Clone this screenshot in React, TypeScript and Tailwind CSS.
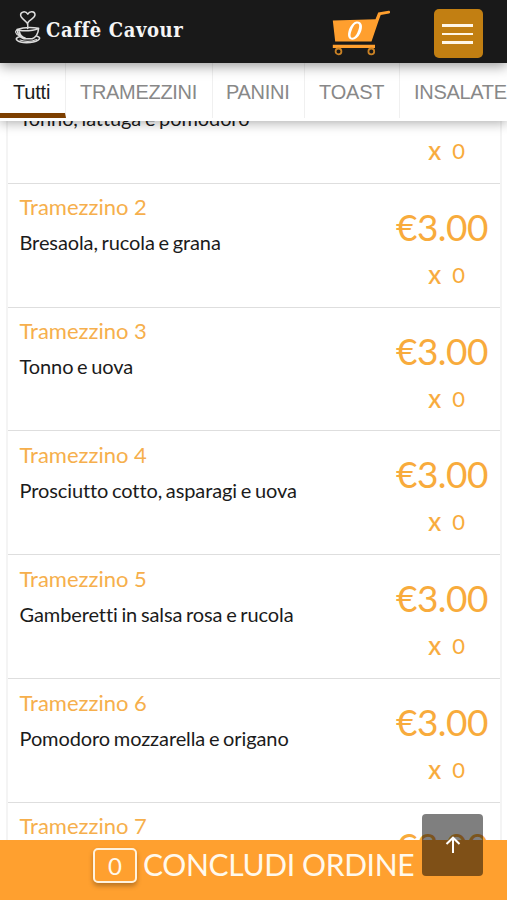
import React from "react";

const lato = "font-['Lato','Open_Sans',sans-serif]";

const tabs = [
  { label: "Tutti", cls: "w-[66px] pl-[13px] text-[#1c1c1c] border-b-[5px] border-b-[#7d3f00] tracking-[-0.2px]" },
  { label: "TRAMEZZINI", cls: "w-[147px] pl-[14px] text-[#888] tracking-[-0.3px]" },
  { label: "PANINI", cls: "w-[92px] pl-[13px] text-[#888] tracking-[-0.3px]" },
  { label: "TOAST", cls: "w-[95px] pl-[14px] text-[#888] tracking-[-0.2px]" },
  { label: "INSALATE", cls: "w-[130px] pl-[14px] text-[#888] tracking-[-0.3px]" },
];

const items = [
  { name: "Tramezzino 1", text: "Tonno, lattuga e pomodoro" },
  { name: "Tramezzino 2", text: "Bresaola, rucola e grana" },
  { name: "Tramezzino 3", text: "Tonno e uova" },
  { name: "Tramezzino 4", text: "Prosciutto cotto, asparagi e uova" },
  { name: "Tramezzino 5", text: "Gamberetti in salsa rosa e rucola" },
  { name: "Tramezzino 6", text: "Pomodoro mozzarella e origano" },
  { name: "Tramezzino 7", text: "Prosciutto cotto e funghi" },
];

function CupLogo() {
  return (
    <svg width="28" height="36" viewBox="0 0 28 36" fill="none" stroke="#dcdcdc" strokeLinecap="round" strokeLinejoin="round">
      <path d="M12.6 14.5C13 11.5 5.6 9 5.6 5C5.6 1.3 10.8.7 12.8 4.2C14.6.6 20 1.1 20 4.8C20 8.2 14.8 9.5 13 12.5C12.2 14 13.2 15.8 12.6 18.5" strokeWidth="1.5" />
      <path d="M2 19.5C8 17.4 18 17.3 23.6 18.2C22 20.8 6 21.8 2 19.5C2.6 24.5 5 27.6 8.8 28.7H17.2C21 27.2 23.2 23.5 23.6 18.2" strokeWidth="1.6" />
      <path d="M4.2 22C5 25.5 7 27.5 10 28.2" strokeWidth="2" />
      <path d="M2 20.6C-.4 19.8.2 24.8 4 25.4" strokeWidth="1.1" />
      <path d="M4.5 26.8C-1.8 28.2 2 32.6 11.5 32.6C22 32.6 28.5 28 22 26.3" strokeWidth="1.6" />
      <path d="M5 30C10 31.8 17 31.5 21.5 29.5" strokeWidth="1.2" />
    </svg>
  );
}

function Cart() {
  return (
    <svg width="60" height="46" viewBox="0 0 60 46" fill="none">
      <path d="M.8 10.5L43.5 9.2L46.2 2.6L56.7.7C58.3.5 58.7 3.2 57 3.5L48.7 5L46.5 11L39.5 31.5H3.2Z" fill="#ff9f2e" />
      <path d="M.8 34.8H43V38H.8Z" fill="#ff9f2e" />
      <circle cx="6.5" cy="41.4" r="2.9" stroke="#c98124" strokeWidth="1.8" />
      <circle cx="39.3" cy="41.4" r="2.9" stroke="#c98124" strokeWidth="1.8" />
      <path
        fillRule="evenodd"
        d="M24.5 11.5C30.5 11 31.3 17 28.4 23C25.6 29 21 31 18 29C14.8 26.8 16 20.5 18.5 16.5C20.2 13.8 22 12 24.5 11.5ZM25.5 13.5C22.5 13 20.6 17.8 19.3 21.5C18 25.3 18.4 28 20.5 27.8C23 27.5 25 24 26.3 20.3C27.5 17 27.8 14 25.5 13.5Z"
        fill="#fff"
      />
    </svg>
  );
}

export default function App() {
  return (
    <div className={`relative flex h-[900px] w-[507px] flex-col overflow-hidden bg-white ${lato} [font-variant-ligatures:none]`}>
      <header className="relative z-20 flex h-[62.5px] shrink-0 items-start bg-[#191919] shadow-[0_3px_12px_rgba(0,0,0,0.4)]">
        <div className="ml-[15px] mt-[10px] w-[31px] shrink-0"><CupLogo /></div>
        <div className="mt-[16px] w-[286px] shrink-0 whitespace-nowrap font-['DejaVu_Serif_Condensed','DejaVu_Serif',serif] text-[20px] font-bold leading-[28px] tracking-[0.6px] text-[#f5f5f5] [font-stretch:condensed]">
          Caffè Cavour
        </div>
        <div className="mt-[9.5px] w-[102px] shrink-0"><Cart /></div>
        <button className="mt-[9px] flex h-[49px] w-[49px] shrink-0 flex-col items-center justify-center gap-[6px] rounded-[5px] bg-[#c27f12] pr-[2px] pt-px">
          <span className="h-[2.5px] w-[31px] bg-[#fff6e6]" />
          <span className="h-[2.5px] w-[31px] bg-[#fff6e6]" />
          <span className="h-[2.5px] w-[31px] bg-[#fff6e6]" />
        </button>
      </header>

      <nav className="relative z-10 flex h-[58.5px] shrink-0 bg-white pb-[3.5px] shadow-[0_2px_11px_rgba(0,0,0,0.32)]">
        {tabs.map((t) => (
          <div key={t.label} className={`shrink-0 whitespace-nowrap border-r border-r-[#f0f0f0] pt-[15px] font-['Liberation_Sans',Arial,sans-serif] text-[20px] leading-[28px] ${t.cls}`}>
            {t.label}
          </div>
        ))}
      </nav>

      <main className="min-h-0 flex-1 overflow-hidden">
        <ul className="-mt-[61.2px] ml-[5.5px] mr-[5px] border-x-2 border-[#f4f4f4]">
          {items.map((item) => (
            <li key={item.name} className="flex h-[123.85px] justify-between border-b-[1.5px] border-[#dedede] pl-[12px] pr-[11px]">
              <div className="pt-[9.5px]">
                <h2 className="text-[22px] leading-[28px] text-[#f6af4c]">{item.name}</h2>
                <p className="mt-[7px] text-[20px] leading-[28px] tracking-[-0.1px] text-[#1b1b1b] [word-spacing:-1.3px]">{item.text}</p>
              </div>
              <div className="flex flex-col items-end text-[#f8ab3c]">
                <div className="mr-px mt-[21px] text-[37px] leading-[44px] tracking-[-0.5px]">€3.00</div>
                <div className="mr-[24px] mt-[12px] flex items-center gap-[11px] leading-[28px]">
                  <span className="-mt-[2px] text-[26px] [-webkit-text-stroke:0.2px_#f8ab3c]">x</span>
                  <span className="text-[22px]">0</span>
                </div>
              </div>
            </li>
          ))}
        </ul>
      </main>

      <footer className="flex h-[60px] shrink-0 items-start bg-[#ffa02f] pl-[93px] pt-[8px] text-[#fff9ed]">
        <span className="flex h-[35px] w-[44px] shrink-0 items-center justify-center rounded-[5px] border-2 border-[#fff3df] text-[24px] shadow-[0_3px_5px_rgba(0,0,0,0.28)]">0</span>
        <span className="-mt-[2px] ml-[6px] whitespace-nowrap text-[30px] leading-[36px] tracking-[-0.35px]">CONCLUDI ORDINE</span>
      </footer>

      <button className="absolute left-[422px] top-[814px] z-30 flex h-[62px] w-[61px] items-center justify-center rounded-[4px] bg-black/50">
        <svg width="16" height="18" viewBox="0 0 16 18" fill="none" stroke="#fff" strokeWidth="2">
          <path d="M8 17V2M1.5 8L8 1.7L14.5 8" />
        </svg>
      </button>
    </div>
  );
}
